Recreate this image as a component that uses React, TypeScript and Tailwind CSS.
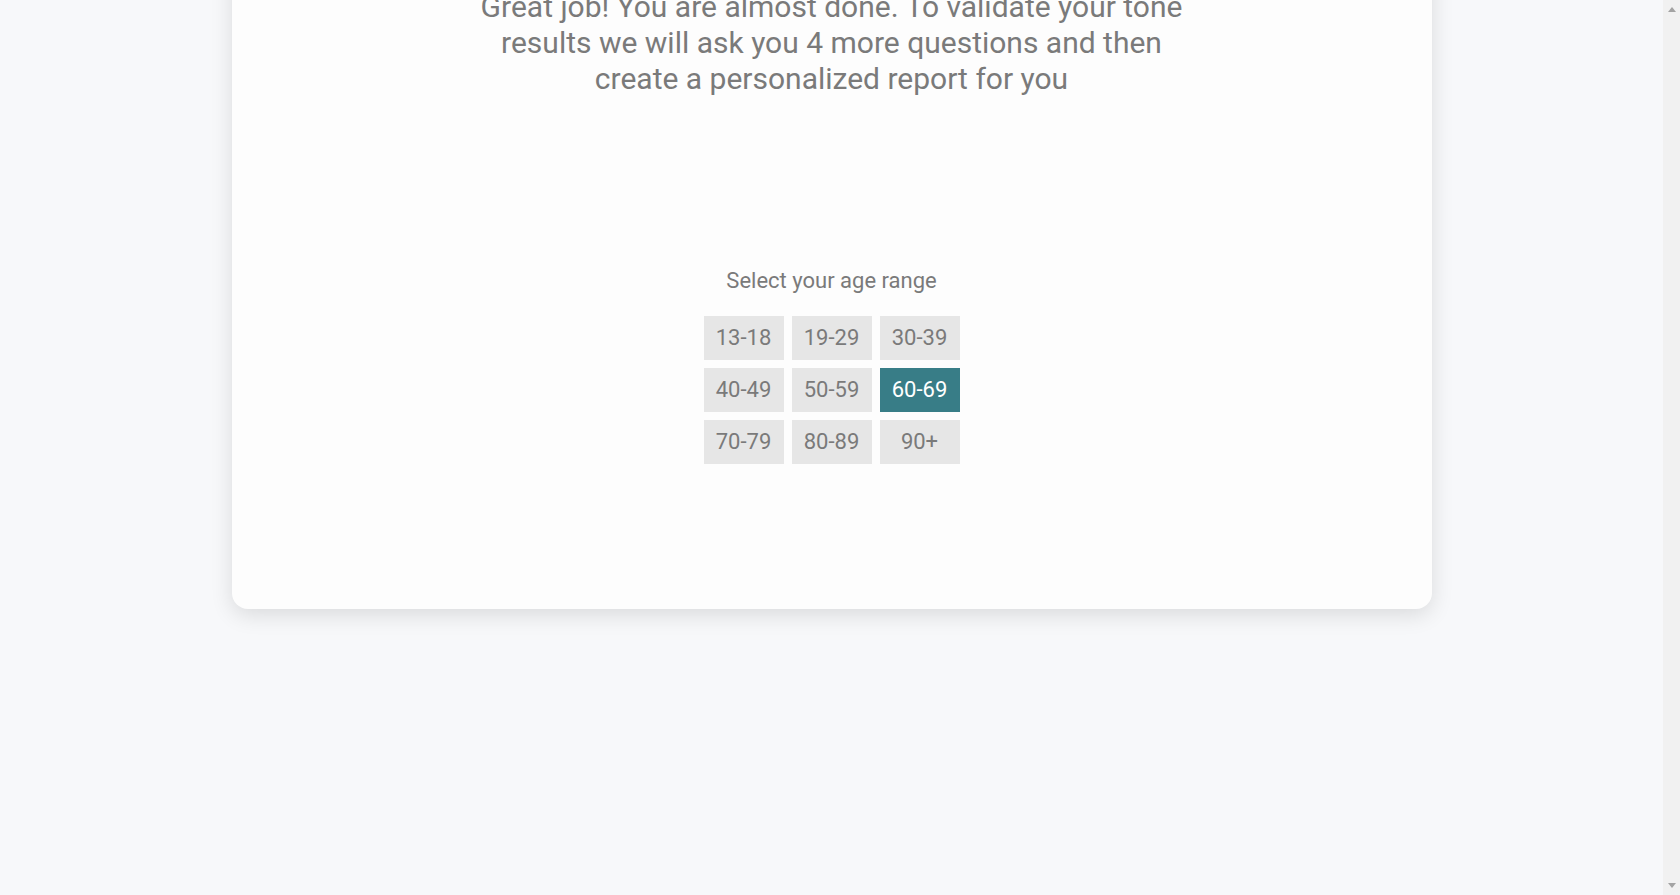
import { useState } from "react";

const ranges = ["13-18", "19-29", "30-39", "40-49", "50-59", "60-69", "70-79", "80-89", "90+"];

function Scrollbar() {
  return (
    <div className="w-[17px] h-full bg-[#f1f1f1] flex flex-col items-center justify-between py-[7px] shrink-0">
      <svg width="8" height="5" viewBox="0 0 8 5">
        <path d="M4 0 L8 5 L0 5 Z" fill="#a3a3a3" />
      </svg>
      <svg width="8" height="5" viewBox="0 0 8 5">
        <path d="M0 0 L8 0 L4 5 Z" fill="#a3a3a3" />
      </svg>
    </div>
  );
}

function App() {
  const [selected, setSelected] = useState("60-69");

  return (
    <div className="h-screen w-full overflow-hidden flex bg-[#f7f8fa]" style={{ fontFamily: "Roboto, 'Noto Sans', sans-serif" }}>
      <div className="flex-1 h-full overflow-hidden">
        <div className="w-[1200px] mx-auto -mt-[40px] pt-[29px] pb-[145px] bg-[#fdfdfd] rounded-2xl shadow-[0_6px_22px_rgba(0,0,0,0.12)] flex flex-col items-center">
          <p className="max-w-[720px] text-center text-[30px] leading-[36px] text-[#7a7a7a]">
            Great job! You are almost done. To validate your tone results we will ask you 4 more questions and then create a personalized report for you
          </p>
          <p className="mt-[171px] text-[22px] leading-[25.5px] text-[#7a7a7a]">Select your age range</p>
          <div className="mt-[22px] grid grid-cols-3 gap-2">
            {ranges.map((r) => (
              <button
                key={r}
                onClick={() => setSelected(r)}
                className={
                  r === selected
                    ? "w-[80px] h-[44px] bg-[#387d87] text-white text-[22px] leading-none"
                    : "w-[80px] h-[44px] bg-[#e6e6e6] text-[#7a7a7a] text-[22px] leading-none"
                }
              >
                {r}
              </button>
            ))}
          </div>
        </div>
      </div>
      <Scrollbar />
    </div>
  );
}

export default App;
